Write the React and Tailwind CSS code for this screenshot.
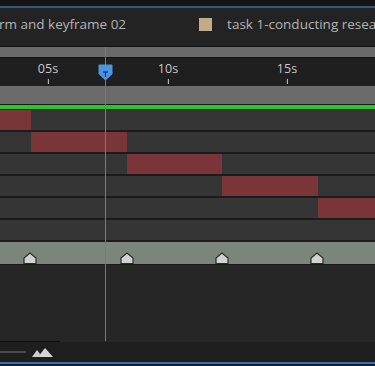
export default function App() {
  const rows = [
    [0, 31],
    [31, 127],
    [127, 222],
    [222, 318],
    [318, 375],
    null,
  ]
  const ticks = [['05s', 48], ['10s', 168], ['15s', 287]]
  const markers = [30, 127, 222, 317]

  return (
    <div className="relative w-[375px] h-[366px] overflow-hidden bg-[#262626] flex flex-col" style={{ fontFamily: '"Open Sans", "Noto Sans", sans-serif' }}>
      {/* top header */}
      <div className="h-[6px] bg-[#141414]" />
      <div className="h-[2px] bg-[#34577c]" />
      <div className="h-[38px] bg-[#232323] flex items-center pb-[6px] text-[13.5px] text-[#b4b4b4] whitespace-nowrap overflow-hidden">
        <span className="-ml-[1px]">rm and keyframe 02</span>
        <span className="ml-[73px] w-[13px] h-[13px] bg-[#c2ab88] shrink-0" />
        <span className="ml-[15px]">task 1-conducting research</span>
      </div>
      <div className="h-px bg-[#121212]" />
      <div className="h-[10px] bg-[#6a6a6a]" />
      <div className="h-px bg-[#121212]" />

      {/* ruler */}
      <div className="relative h-[28px] bg-[#1f1f1f]">
        {ticks.map(([t, x]) => (
          <div key={t} className="absolute top-[3px] flex flex-col items-center -translate-x-1/2" style={{ left: x }}>
            <span className="text-[12.5px] leading-[16px] text-[#c9c9c9]">{t}</span>
            <span className="mt-[2px] w-px h-[5px] bg-[#cfcfcf]" />
          </div>
        ))}
      </div>

      <div className="h-[18px] bg-[#6b6b6b]" />
      <div className="h-[6px] bg-[#0f1f0f] flex flex-col justify-center">
        <div className="h-[4px] bg-[#2cc52c]" />
      </div>

      {/* layer rows */}
      {rows.map((r, i) => (
        <div key={i} className="relative h-[22px] bg-[#353535] border-b-2 border-[#1c1c1c]">
          {r && <div className="absolute top-0 bottom-0 bg-[#7a3538]" style={{ left: r[0], width: r[1] - r[0] }} />}
        </div>
      ))}

      {/* marker band */}
      <div className="relative h-[23px] bg-[#7b857b] border-b border-[#1a1a1a]">
        {markers.map(x => (
          <svg key={x} className="absolute bottom-0 -translate-x-1/2" style={{ left: x }} width="14" height="12" viewBox="0 0 14 12">
            <path d="M1 11.5 V6 L7 1 L13 6 V11.5 Z" fill="#d2d2d2" stroke="#2a2a2a" strokeWidth="1.2" />
          </svg>
        ))}
      </div>

      <div className="flex-1 bg-[#262626]" />
      <div className="h-px w-[60px] bg-[#0e0e0e]" />

      {/* bottom bar */}
      <div className="h-[20px] bg-[#1e1e1e] flex items-center">
        <div className="w-[26px] h-[2px] bg-[#4a4a4a]" />
        <svg className="ml-[6px]" width="22" height="9" viewBox="0 0 22 9">
          <path d="M0 9 L5 2 L8 6 L7 9 Z" fill="#cfcfcf" />
          <path d="M6 9 L13 0 L21 9 Z" fill="#d6d6d6" />
        </svg>
      </div>
      <div className="h-[2px] bg-[#3a6ea5]" />
      <div className="h-[2px] bg-[#0f1d33]" />

      {/* playhead */}
      <div className="absolute left-[105px] top-[47px] h-[294px] w-px bg-[#3f84d6]" />
      <svg className="absolute left-[98px] top-[64px]" width="15" height="17" viewBox="0 0 15 17">
        <path d="M1.5 0.5 H13.5 Q14.5 0.5 14.5 1.5 V10 L7.5 16.5 L0.5 10 V1.5 Q0.5 0.5 1.5 0.5 Z" fill="#4c95e6" />
        <path d="M5 8 H10 M7.5 8 V13" stroke="#1a1a1a" strokeWidth="1" />
      </svg>
    </div>
  )
}
